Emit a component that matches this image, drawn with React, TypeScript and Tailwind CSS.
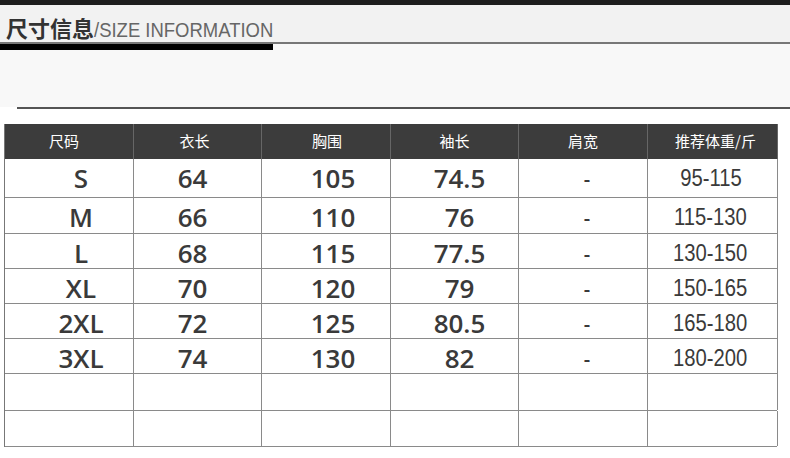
const rows = [
  ["S", "64", "105", "74.5", "-", "95-115"],
  ["M", "66", "110", "76", "-", "115-130"],
  ["L", "68", "115", "77.5", "-", "130-150"],
  ["XL", "70", "120", "79", "-", "150-165"],
  ["2XL", "72", "125", "80.5", "-", "165-180"],
  ["3XL", "74", "130", "82", "-", "180-200"],
  ["", "", "", "", "", ""],
  ["", "", "", "", "", ""],
];

const rowHeights = ["h-[39px]", "h-[36px]", "h-[35px]", "h-[35px]", "h-[35px]", "h-[35px]", "h-[37px]", "h-[36px]"];

const headers = ["尺码", "衣长", "胸围", "袖长", "肩宽", "推荐体重/斤"];
const headerPad = ["pr-[10px]", "pr-[6px]", "pl-[2px]", "", "", "pl-[6px]"];

// the values sit a little off the column centres in the picture
const cellPad = ["pl-[24px]", "pr-[10px]", "pl-[14px]", "pl-[10px]", "pl-[8px]", "pr-[4px]"];

const cols = "grid grid-cols-[129px_128px_129px_128px_129px_130px]";

export default function App() {
  return (
    <div className="w-[790px] h-[458px] bg-white overflow-hidden">
      {/* top strip */}
      <div className="h-[5px] bg-[#1e1e1e]" />

      {/* title */}
      <div className="h-[37px] bg-[#f2f2f2] flex items-end pl-[6px] pb-[2px]">
        <div className="flex items-baseline leading-none">
          <span className="text-[22px] font-bold text-[#333] font-['Noto_Sans_CJK_SC',sans-serif]">
            尺寸信息
          </span>
          <span className="inline-block origin-left scale-x-[0.88] whitespace-nowrap text-[21px] text-[#666] font-['Liberation_Sans',sans-serif]">
            /SIZE INFORMATION
          </span>
        </div>
      </div>
      <div className="h-[2px] bg-[#777]" />

      {/* light band */}
      <div className="h-[63px] bg-[#f8f8f8]">
        <div className="w-[273px] h-[6px] bg-black" />
      </div>
      <div className="pl-[17px]">
        <div className="h-[2px] bg-[#555]" />
      </div>

      {/* table */}
      <div className="pt-[15px] pl-[4px]">
        <div className="w-[773px] border-l border-[#777]">
          <div className={`${cols} h-[35px] bg-[#3c3c3c]`}>
            {headers.map((h, i) => (
              <div
                key={h}
                className={`flex items-center justify-center text-white text-[15px] font-['Noto_Sans_CJK_SC',sans-serif] border-r border-[#666] ${headerPad[i]}`}
              >
                {h}
              </div>
            ))}
          </div>
          {rows.map((r, ri) => (
            <div key={ri} className={`${cols} ${rowHeights[ri]} border-b border-[#8a8a8a]`}>
              {r.map((c, ci) => (
                <div
                  key={ci}
                  className={`flex items-center justify-center border-r border-[#8a8a8a] text-[#3a3a3a] ${cellPad[ci]} ${
                    ci === 5
                      ? "text-[23px] font-['Liberation_Sans',sans-serif]"
                      : ci === 4
                      ? "text-[20px] font-semibold font-['Open_Sans',sans-serif]"
                      : "text-[26px] font-semibold font-['Open_Sans',sans-serif]"
                  }`}
                >
                  {ci === 5 ? (
                    <span className="inline-block scale-x-[0.88] whitespace-nowrap">{c}</span>
                  ) : (
                    c
                  )}
                </div>
              ))}
            </div>
          ))}
        </div>
      </div>
    </div>
  );
}
